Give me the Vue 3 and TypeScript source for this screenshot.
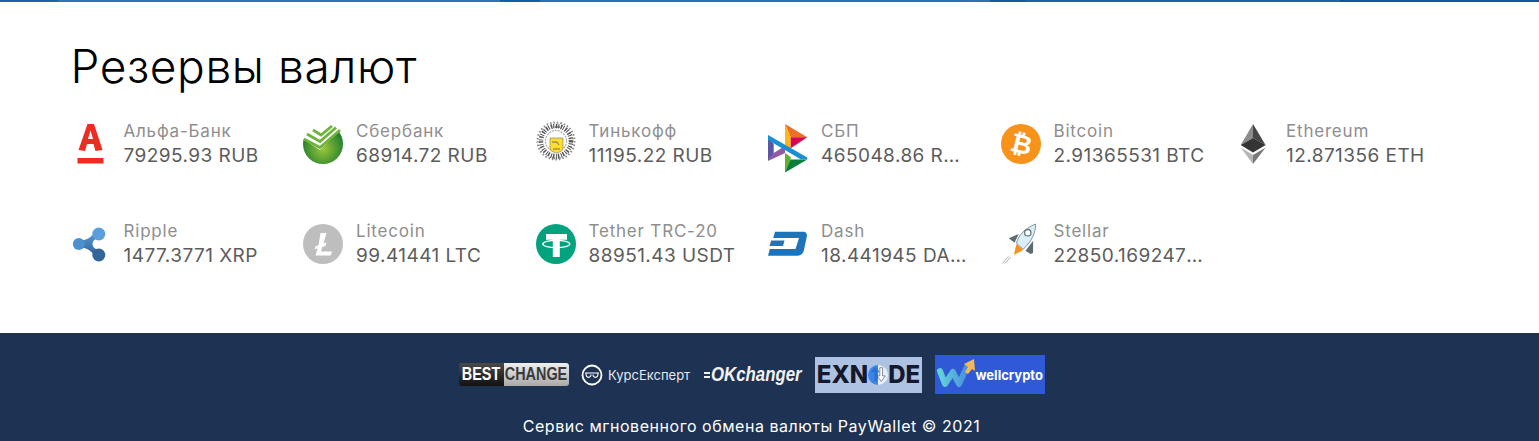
<script setup lang="ts">
interface Reserve {
  id: string
  name: string
  amount: string
  cutWidth?: number
}

const reserves: Reserve[] = [
  { id: 'alfa', name: 'Альфа-Банк', amount: '79295.93 RUB' },
  { id: 'sber', name: 'Сбербанк', amount: '68914.72 RUB' },
  { id: 'tinkoff', name: 'Тинькофф', amount: '11195.22 RUB' },
  { id: 'sbp', name: 'СБП', amount: '465048.86 RUB', cutWidth: 142 },
  { id: 'btc', name: 'Bitcoin', amount: '2.91365531 BTC' },
  { id: 'eth', name: 'Ethereum', amount: '12.871356 ETH' },
  { id: 'xrp', name: 'Ripple', amount: '1477.3771 XRP' },
  { id: 'ltc', name: 'Litecoin', amount: '99.41441 LTC' },
  { id: 'usdt', name: 'Tether TRC-20', amount: '88951.43 USDT' },
  { id: 'dash', name: 'Dash', amount: '18.441945 DASH', cutWidth: 147 },
  { id: 'xlm', name: 'Stellar', amount: '22850.169247 XLM', cutWidth: 150 },
]

function cutStyle(item: Reserve) {
  return item.cutWidth ? { width: item.cutWidth + 'px' } : undefined
}
</script>

<template>
  <div class="page">
    <div class="top-line"></div>
    <main class="content">
      <h1 class="title">Резервы валют</h1>
      <div class="grid">
        <div v-for="item in reserves" :key="item.id" class="reserve">
          <svg class="icon" viewBox="0 0 40 40">
            <template v-if="item.id === 'alfa'">
              <path fill="#ef2b22" fill-rule="evenodd" d="M16.500 0H23l8.500 26-7 1-2-7H16l-2 7-6.500-1zM19.500 6.500 17 15h5z" />
              <path fill="#ef2b22" d="M6.500 34h26v5.500h-26z" />
            </template>
            <template v-else-if="item.id === 'sber'">
              <defs>
                <radialGradient id="sber-g" cx=".5" cy=".62" r=".55">
                  <stop offset="0" stop-color="#9cc63a" />
                  <stop offset="1" stop-color="#1f7f2e" />
                </radialGradient>
              </defs>
              <circle cx="20" cy="20" r="20" fill="url(#sber-g)" />
              <path fill="#fff" d="M0 0h40v3L17 26 0 15z" />
              <path fill="none" stroke="#6fb43a" stroke-width="2.800" d="M10 6l8 5 11-9M4 10l13 7.500L33 3.500M1 15l16 8.500L37 6" />
            </template>
            <template v-else-if="item.id === 'tinkoff'">
              <circle cx="20" cy="17" r="15" fill="none" stroke="#555" stroke-width="4.500" stroke-dasharray="1.500 1 1 1.500" />
              <circle cx="20" cy="17" r="18.500" fill="none" stroke="#888" stroke-width="2" stroke-dasharray="1.500 2" />
              <circle cx="20" cy="17" r="10.500" fill="none" stroke="#aaa" stroke-width="1.200" stroke-dasharray="2 1" />
              <path fill="none" stroke="#666" stroke-width="1.500" stroke-dasharray="1 1" d="M15 3h10M14 33c4 2 8 2 12 0" />
              <path fill="#ffdd2d" stroke="#777" stroke-width=".6" d="M14 14h13v10c0 3-3 4-6.500 5-3.500-1-6.500-2-6.500-5z" />
              <path fill="none" stroke="#555" stroke-width=".8" d="M16 18h5l2 3M17 25h7" />
            </template>
            <template v-else-if="item.id === 'sbp'">
              <path fill="#5b57a2" d="M0 11l5.700 9v10L0 37z" />
              <path fill="#915aa5" d="M0 37l5.700-8L17 22v7z" />
              <path fill="#ed6f26" d="M17 0l22.300 13.300H22.700z" />
              <path fill="#fab718" d="M17 0l5.700 13.300V25L17 22z" />
              <path fill="#d90751" d="M22.700 13.300h16.600L22.700 24.300z" />
              <path fill="#63b22f" d="M17 48.500V29l5.700 4v5z" />
              <path fill="#097f3b" d="M17 48.500l22.300-13H22.700z" />
              <path fill="#1b8fd3" d="M0 11l39.300 22.500v2H33L0 16z" />
            </template>
            <template v-else-if="item.id === 'btc'">
              <circle cx="20" cy="20" r="20" fill="#f7931a" />
              <text x="20.500" y="29" text-anchor="middle" transform="rotate(14 20 20)" class="glyph">₿</text>
            </template>
            <template v-else-if="item.id === 'eth'">
              <path fill="#8c8c8c" d="M20 0 7.700 21 20 14z" />
              <path fill="#454545" d="M20 0l12.500 21L20 14z" />
              <path fill="#343434" d="M7.700 21 20 28.500 32.700 21 20 14z" />
              <path fill="#b4b4b4" d="M7.700 23.500 20 40V31z" />
              <path fill="#7a7a7a" d="M32.700 23.500 20 40V31z" />
            </template>
            <template v-else-if="item.id === 'xrp'">
              <defs>
                <linearGradient id="xrp-g" x1="0" y1="0" x2="0" y2="1">
                  <stop offset="0" stop-color="#5b9ed9" />
                  <stop offset="1" stop-color="#2f5f94" />
                </linearGradient>
              </defs>
              <path fill="url(#xrp-g)" d="M8 16.500c5 0 9-1 13-5l4-5 6 6-5 2c-3 1-4.500 3-4.500 5.500s1.500 4.500 4.500 5.500l5 2-6 6-4-5c-4-4-8-5-13-5z" />
              <circle cx="7.800" cy="20" r="6" fill="#4d90d0" />
              <circle cx="27.800" cy="10" r="6.500" fill="#5b9ed9" />
              <circle cx="27.800" cy="31" r="6.500" fill="#33659b" />
            </template>
            <template v-else-if="item.id === 'ltc'">
              <circle cx="20" cy="20" r="20" fill="#bebebe" />
              <path fill="#fff" d="M17.500 9h6l-3 10.500 3-1-1 3.500-3.200 1-1.300 4.500H29l-1.200 4H12.500l2.200-7.300-3 1 .8-3 3-1z" />
            </template>
            <template v-else-if="item.id === 'usdt'">
              <circle cx="20" cy="20" r="20" fill="#00a37d" />
              <path fill="#fff" d="M10 10h21v5.700h-7.200V33h-7V15.700H10z" />
              <ellipse cx="20.300" cy="20" rx="13.500" ry="3.600" fill="none" stroke="#fff" stroke-width="1.300" />
            </template>
            <template v-else-if="item.id === 'dash'">
              <path fill="#1c75bc" d="M7 7.700h28c3 0 4.500 2 3.800 5l-2.800 13c-.7 3.500-3 6-6.500 6H0l1.800-6.700h25.700l3.500-11H5.200zM3.200 16.500h13.300l-1.500 5.500H1.500z" />
            </template>
            <template v-else>
              <path fill="none" stroke="#b5b5b5" d="M1.500 39.500l6-7M4 39.500l5.500-6.500" />
              <path fill="#f7931a" d="M15.500 20l6.700 6-9.400 5z" />
              <path fill="#5f6b73" d="M7.800 14.300 17.800 10l-4.300 8.700zM24.500 26.700l7.700-10-.2 12.300-2.500 1z" />
              <path fill="#d9eef8" stroke="#6d7b84" stroke-width=".8" d="M15.500 19.300C17 12 23 5 34.500 0 35 8 31 17 22.200 25.300z" />
              <circle cx="26.800" cy="8.700" r="3.200" fill="#fff" stroke="#6d7b84" stroke-width="1.300" />
            </template>
          </svg>
          <div class="info">
            <div class="name">{{ item.name }}</div>
            <div class="amount" :class="{ cut: item.cutWidth }" :style="cutStyle(item)">{{ item.amount }}</div>
          </div>
        </div>
      </div>
    </main>
    <footer class="footer">
      <div class="partners">
        <div class="bestchange">
          <span class="bc-dark"><b>BEST</b></span>
          <span class="bc-light"><b>CHANGE</b></span>
        </div>
        <div class="kurs">
          <svg class="kurs-icon" viewBox="0 0 22 22">
            <circle cx="11" cy="11" r="9.500" fill="none" stroke="#fff" stroke-width="1.800" />
            <path fill="none" stroke="#fff" stroke-width="1.100" d="M4 9h14M5 9.500c0 5 5 5 5 1M12 10.500c0 4 5 4 5-1" />
          </svg>
          <span>КурсЕксперт</span>
        </div>
        <div class="okchanger"><i class="ok-lines"></i><span>OKchanger</span></div>
        <div class="exnode">
          <span>EXN</span>
          <svg class="ex-o" viewBox="0 0 22 22">
            <path fill="#3b86e6" d="M11 0a11 11 0 0 0 0 22z" />
            <path fill="#e8eef8" d="M11 0a11 11 0 0 1 0 22z" />
            <path fill="#2a72d8" d="M6 3l5 6H8v10H5V9H1z" transform="translate(2 -1)" />
            <path fill="#fff" stroke="#16192c" stroke-width=".5" d="M13 3h3v9h3l-4.500 6L10 12h3z" />
          </svg>
          <span>DE</span>
        </div>
        <div class="well">
          <svg class="well-icon" viewBox="0 0 40 39">
            <defs>
              <linearGradient id="well-g" x1="0" y1="0" x2="1" y2="0">
                <stop offset="0" stop-color="#62d2d8" />
                <stop offset="1" stop-color="#4a8fdc" />
              </linearGradient>
            </defs>
            <path fill="none" stroke="url(#well-g)" stroke-width="6" stroke-linejoin="round" stroke-linecap="round" d="M5 16l5 13 8-12 6 12 8-17" />
            <path fill="#f4b957" d="M29 9l10-5 1 12-3-2-4 5-3-2 3-5z" />
          </svg>
          <span>wellcrypto</span>
        </div>
      </div>
      <p class="copy">Сервис мгновенного обмена валюты PayWallet © 2021</p>
    </footer>
  </div>
</template>

<style scoped>
.page {
  font-family: "Inter", "Liberation Sans", sans-serif;
  background: #fff;
  height: 441px;
  overflow: hidden;
}

.top-line {
  height: 2px;
  background: linear-gradient(90deg,
    #1b62b0 0 58px, #2f74b8 58px 500px, #0a62ae 500px 540px, #2274b9 540px 960px,
    #2f6fb5 960px 990px, #0f5ca6 990px 1025px, #1865ae 1025px 1340px, #0a57a8 1340px);
}

.content {
  height: 331px;
  padding: 0 70.5px;
  box-sizing: border-box;
}

.title {
  margin: 0;
  padding-top: 37px;
  font-size: 46px;
  line-height: 54px;
  font-weight: 300;
  letter-spacing: 0.6px;
  color: #000;
}

.grid {
  display: grid;
  grid-template-columns: repeat(6, 232.5px);
  grid-auto-rows: 100px;
  margin-top: 31px;
}

.reserve {
  display: flex;
  align-items: flex-start;
  gap: 13px;
}

.icon {
  width: 40px;
  height: 40px;
  flex: none;
  overflow: visible;
}

.glyph {
  font-family: "DejaVu Sans", sans-serif;
  font-size: 26px;
  font-weight: 700;
  fill: #fff;
}

.info {
  min-width: 0;
  margin-top: -3px;
}

.name {
  font-size: 17px;
  line-height: 20px;
  letter-spacing: 0.8px;
  color: #8e8e8e;
  white-space: nowrap;
}

.amount {
  font-size: 19px;
  line-height: 30px;
  letter-spacing: 0.45px;
  color: #5c5c5c;
  white-space: nowrap;
}

.amount.cut {
  overflow: hidden;
  text-overflow: ellipsis;
}

.footer {
  height: 108px;
  padding-right: 36px;
  background: #1e3253;
  color: #fff;
  text-align: center;
}

.partners {
  display: flex;
  justify-content: center;
  align-items: center;
  gap: 12.5px;
  padding-top: 22px;
  height: 39px;
}

.bestchange {
  display: flex;
  width: 110px;
  height: 23px;
  border-radius: 3px;
  overflow: hidden;
  font-family: "Liberation Sans", sans-serif;
  font-size: 18px;
  line-height: 23px;
}

.bestchange b {
  display: block;
  flex: none;
  transform: scaleX(0.8);
}

.bc-dark {
  display: flex;
  justify-content: center;
  width: 45px;
  background: linear-gradient(#4a4a4a, #111);
  color: #fff;
}

.bc-light {
  display: flex;
  justify-content: center;
  flex: 1;
  min-width: 0;
  background: linear-gradient(#f0f0f0, #a8a8a8);
  color: #3a3a3a;
}

.kurs {
  display: flex;
  align-items: center;
  gap: 5px;
  width: 110px;
  font-size: 13px;
  color: #e6e9ef;
  white-space: nowrap;
}

.kurs-icon {
  width: 22px;
  height: 22px;
  flex: none;
}

.okchanger {
  display: flex;
  align-items: center;
  width: 99px;
  font-family: "Liberation Sans", sans-serif;
  font-size: 20px;
  font-weight: 700;
  font-style: italic;
  color: #f2f2f2;
  white-space: nowrap;
}

.okchanger span {
  display: block;
  transform: scaleX(0.84);
  transform-origin: left center;
  margin-left: 1px;
}

.ok-lines {
  display: block;
  width: 6px;
  height: 6px;
  flex: none;
  border-top: 2px solid #f2f2f2;
  border-bottom: 2px solid #f2f2f2;
  box-sizing: border-box;
}

.exnode {
  display: flex;
  align-items: center;
  justify-content: center;
  width: 107px;
  height: 36px;
  background: #aec3e4;
  color: #16192c;
  font-size: 24px;
  font-weight: 800;
}

.ex-o {
  width: 20px;
  height: 20px;
  flex: none;
}

.well {
  display: flex;
  align-items: center;
  gap: 1px;
  width: 110px;
  height: 39px;
  background: #3059d8;
  font-size: 13px;
  font-weight: 700;
  box-sizing: border-box;
  white-space: nowrap;
}

.well-icon {
  width: 40px;
  height: 39px;
  flex: none;
}

.copy {
  margin: 22px 0 0;
  font-size: 16px;
  line-height: 20px;
  letter-spacing: 0.53px;
}
</style>
